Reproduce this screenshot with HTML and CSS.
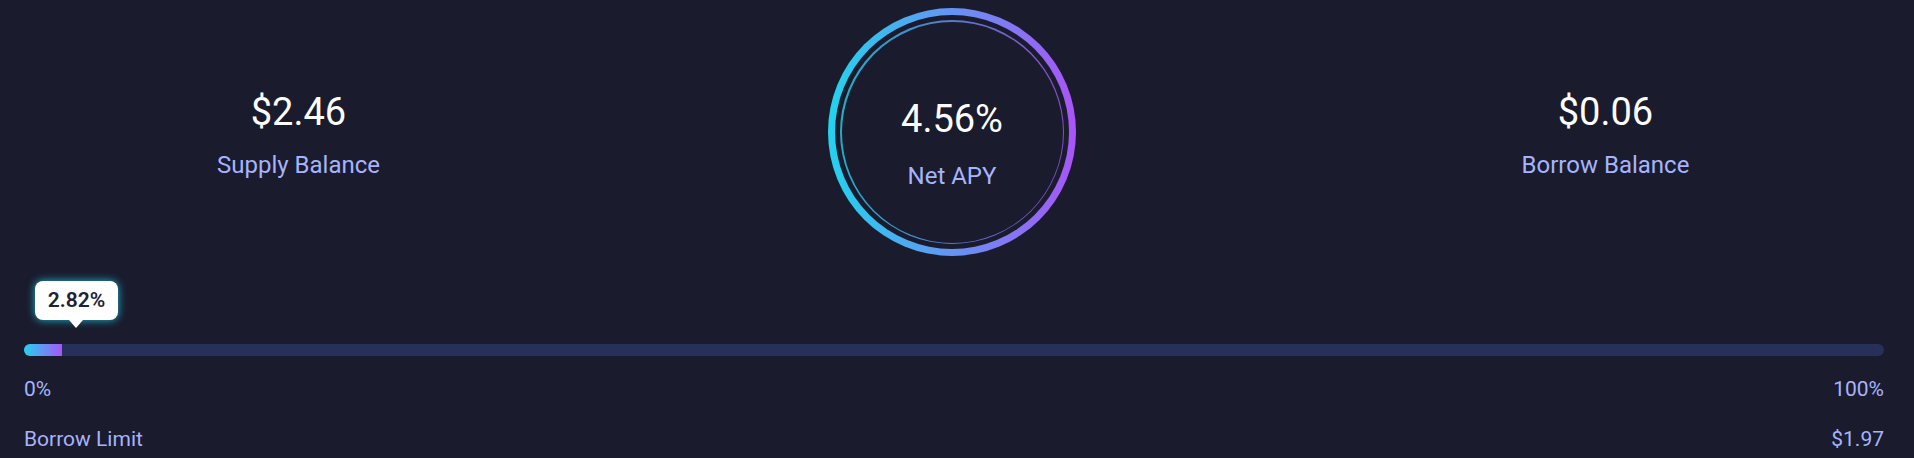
FILE: index.html
```html
<!DOCTYPE html>
<html lang="en">
<head>
  <meta charset="UTF-8" />
  <meta name="viewport" content="width=device-width, initial-scale=1.0"/>
  <title>Dashboard - Net APY</title>
  <link rel="stylesheet" href="styles.css">
</head>
<body>
  <section class="stats">
    <div class="stat">
      <div class="value">$2.46</div>
      <div class="label">Supply Balance</div>
    </div>

    <div class="apy">
      <div class="apy-gap">
        <div class="apy-thin">
          <div class="apy-core">
            <div class="value">4.56%</div>
            <div class="label apy-label">Net APY</div>
          </div>
        </div>
      </div>
    </div>

    <div class="stat">
      <div class="value">$0.06</div>
      <div class="label">Borrow Balance</div>
    </div>
  </section>

  <section class="limit">
    <div class="bar">
      <div class="tooltip">2.82%</div>
      <div class="bar-fill" style="width: 2.05%;"></div>
    </div>
    <div class="row scale">
      <span>0%</span>
      <span>100%</span>
    </div>
    <div class="row">
      <span>Borrow Limit</span>
      <span>$1.97</span>
    </div>
  </section>
</body>
</html>
```

FILE: styles.css
```css
body {
  font-family: Roboto, "Noto Sans", sans-serif;
  margin: 0;
  background: #1a1b2d;
  color: #ffffff;
}
.stats {
  display: flex;
  justify-content: space-between;
  align-items: flex-start;
  padding: 8px 34px 0 24px;
}
.stat {
  width: 549px;
  margin-top: 82px;
  text-align: center;
}
.value {
  font-size: 38px;
  line-height: 1.2;
}
.label {
  margin-top: 15px;
  font-size: 24px;
  line-height: 1.2;
  color: #a5b4fc;
}
.apy {
  width: 248px;
  height: 248px;
  box-sizing: border-box;
  padding: 7px;
  border-radius: 50%;
  background: linear-gradient(90deg, #22d3ee, #a855f7);
}
.apy-gap {
  height: 100%;
  box-sizing: border-box;
  padding: 5px;
  border-radius: 50%;
  background: #1a1b2d;
}
.apy-thin {
  height: 100%;
  box-sizing: border-box;
  padding: 1.5px;
  border-radius: 50%;
  background: linear-gradient(90deg, rgba(34,211,238,0.8), rgba(168,85,247,0.8));
}
.apy-core {
  height: 100%;
  box-sizing: border-box;
  padding-top: 75px;
  border-radius: 50%;
  background: #1a1b2d;
  text-align: center;
}
.apy-label {
  margin-top: 20px;
}
.limit {
  padding: 0 30px 0 24px;
  margin-top: 88px;
}
.bar {
  position: relative;
  height: 12px;
  border-radius: 6px;
  background: #27305a;
}
.bar-fill {
  height: 100%;
  border-radius: 6px 0 0 6px;
  background: linear-gradient(90deg, #22d3ee, #a855f7);
}
.tooltip {
  position: absolute;
  left: 11px;
  top: -63px;
  width: 83px;
  height: 39px;
  border-radius: 8px;
  background: #ffffff;
  box-shadow: 0 0 8px rgba(34, 211, 238, 0.85);
  color: #1e2235;
  font-size: 21px;
  font-weight: 600;
  line-height: 39px;
  text-align: center;
}
.tooltip::after {
  content: "";
  position: absolute;
  left: 34px;
  bottom: -8px;
  border-left: 7px solid transparent;
  border-right: 7px solid transparent;
  border-top: 8px solid #ffffff;
}
.row {
  display: flex;
  justify-content: space-between;
  margin-top: 25px;
  font-size: 21px;
  line-height: 1.2;
  color: #a5b4fc;
}
.scale {
  margin-top: 21px;
}
```
